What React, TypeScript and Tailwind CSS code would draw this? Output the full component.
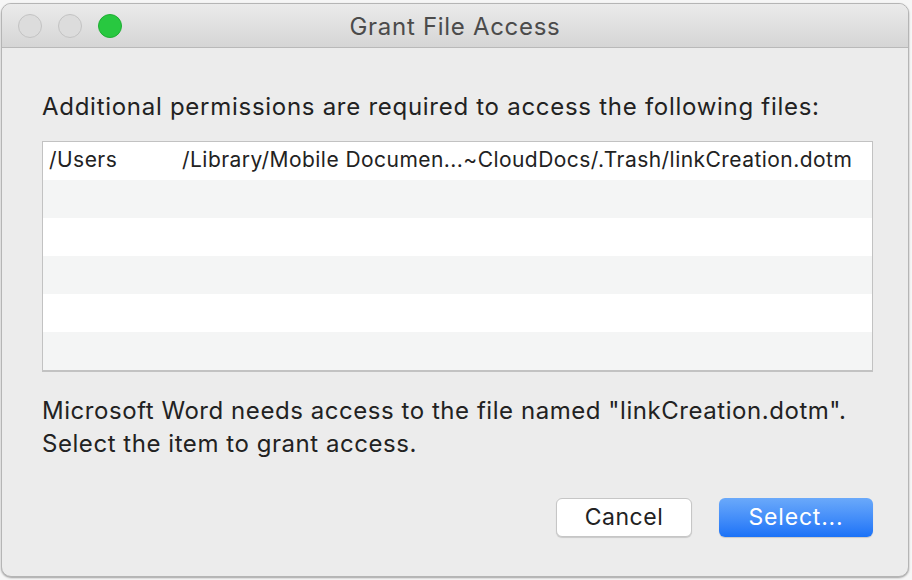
export default function App() {
    const rows = [0, 1, 2, 3, 4, 5]

    return (
        <div className="h-[580px] w-[912px] bg-[#f6f6f6] pl-[1px] pr-[3px] pt-[3px] pb-[3px] font-['Inter',sans-serif]">
            <div className="flex h-full flex-col overflow-hidden rounded-[10px] border border-[#b5b5b5] bg-[#ececec] shadow-[0_1px_2px_rgba(0,0,0,0.35)]">
                {/* title bar */}
                <div className="relative flex h-[44px] shrink-0 items-center border-b border-[#b9b9b9] bg-gradient-to-b from-[#ebebeb] to-[#d5d5d5] px-[16px]">
                    <div className="flex gap-[16px]">
                        <span className="h-[24px] w-[24px] rounded-full border border-[#c3c3c3] bg-[#dcdcdc]" />
                        <span className="h-[24px] w-[24px] rounded-full border border-[#c3c3c3] bg-[#dcdcdc]" />
                        <span className="h-[24px] w-[24px] rounded-full border border-[#1fae33] bg-[#28c840]" />
                    </div>
                    <div className="absolute inset-0 flex items-center justify-center pt-[2px] text-[24px] tracking-[0.7px] text-[#4b4b4b]">
                        Grant File Access
                    </div>
                </div>

                {/* body */}
                <div className="flex flex-1 flex-col px-[40px]">
                    <p className="mt-[45px] text-[24px] leading-[28px] tracking-[0.72px] text-[#222]">
                        Additional permissions are required to access the following files:
                    </p>
                    <div className="mt-[20px] w-[831px] border border-b-2 border-[#c2c2c2]">
                        {rows.map((i) => (
                            <div
                                key={i}
                                className={`flex h-[38px] items-center pb-[3px] text-[21px] tracking-[0.45px] text-[#222] ${
                                    i % 2 === 0 ? 'bg-white' : 'bg-[#f4f5f5]'
                                }`}
                            >
                                {i === 0 && (
                                    <>
                                        <span className="w-[139px] pl-[6px]">/Users</span>
                                        <span>/Library/Mobile Documen...~CloudDocs/.Trash/linkCreation.dotm</span>
                                    </>
                                )}
                            </div>
                        ))}
                    </div>
                    <p className="mt-[22px] text-[24px] leading-[33px] tracking-[0.55px] text-[#222]">
                        Microsoft Word needs access to the file named "linkCreation.dotm".
                        <br />
                        Select the item to grant access.
                    </p>
                    <div className="mt-[38px] flex w-[831px] justify-end gap-[27px]">
                        <button className="h-[39px] w-[136px] rounded-[6px] border border-[#c6c6c6] bg-white text-[23px] tracking-[0.5px] text-[#222] shadow-[0_1px_1px_rgba(0,0,0,0.15)]">
                            Cancel
                        </button>
                        <button className="h-[39px] w-[154px] rounded-[6px] bg-gradient-to-b from-[#6aa9fa] to-[#1a72f7] text-[23px] tracking-[0.8px] text-white shadow-[0_1px_1px_rgba(0,0,0,0.15)]">
                            Select...
                        </button>
                    </div>
                </div>
            </div>
        </div>
    )
}
